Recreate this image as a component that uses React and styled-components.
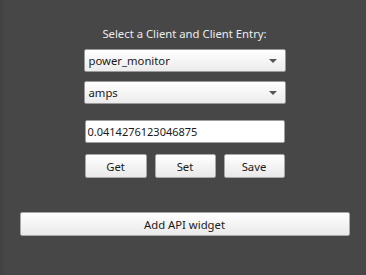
import React from 'react'
import styled, { createGlobalStyle } from 'styled-components'

const GlobalStyle = createGlobalStyle`
  html, body {
    margin: 0;
    padding: 0;
    background: #474747;
  }
  * {
    box-sizing: border-box;
  }
`

const Window = styled.div`
  width: 366px;
  height: 275px;
  background: #474747;
  border-left: 3px solid #424242;
  font-family: 'Noto Sans', 'Open Sans', sans-serif;
  font-size: 11.3px;
  display: flex;
  flex-direction: column;
  align-items: center;
  padding-top: 26px;
  overflow: hidden;
`

const Title = styled.div`
  color: #ececec;
  line-height: 16px;
  height: 16px;
  margin-bottom: 7px;
`

const Combo = styled.div`
  width: 202px;
  height: 23px;
  margin-bottom: ${({ $gap }) => $gap}px;
  border: 1px solid #9a9a9a;
  border-radius: 2px;
  background: linear-gradient(#ffffff, #ebebeb);
  display: flex;
  align-items: center;
  justify-content: space-between;
  padding: 0 8px 0 4px;
  color: #1a1a1a;
  font-size: 11.3px;
`

const Arrow = styled.span`
  width: 0;
  height: 0;
  border-left: 4px solid transparent;
  border-right: 4px solid transparent;
  border-top: 4px solid #555;
`

const Field = styled.div`
  width: 200px;
  height: 23px;
  margin-bottom: 11px;
  border: 1px solid #a0a0a0;
  border-radius: 2px;
  background: #fff;
  color: #1a1a1a;
  display: flex;
  align-items: center;
  padding-left: 2px;
  font-size: 11px;
`

const ButtonRow = styled.div`
  width: 200px;
  display: flex;
  gap: 8px;
  margin-bottom: 34px;
`

const Button = styled.button`
  width: ${({ $w }) => $w || 61}px;
  height: 24px;
  padding: 0;
  border: 1px solid #a8a8a8;
  border-radius: 2px;
  background: linear-gradient(#ffffff, #e9e9e9);
  color: #1a1a1a;
  font-family: inherit;
  font-size: 11.3px;
`

export default function App() {
  return (
    <>
      <GlobalStyle />
      <Window>
        <Title>Select a Client and Client Entry:</Title>
        <Combo $gap={9}>
          power_monitor
          <Arrow />
        </Combo>
        <Combo $gap={16}>
          amps
          <Arrow />
        </Combo>
        <Field>0.0414276123046875</Field>
        <ButtonRow>
          <Button $w={62}>Get</Button>
          <Button>Set</Button>
          <Button>Save</Button>
        </ButtonRow>
        <Button $w={330}>Add API widget</Button>
      </Window>
    </>
  )
}
